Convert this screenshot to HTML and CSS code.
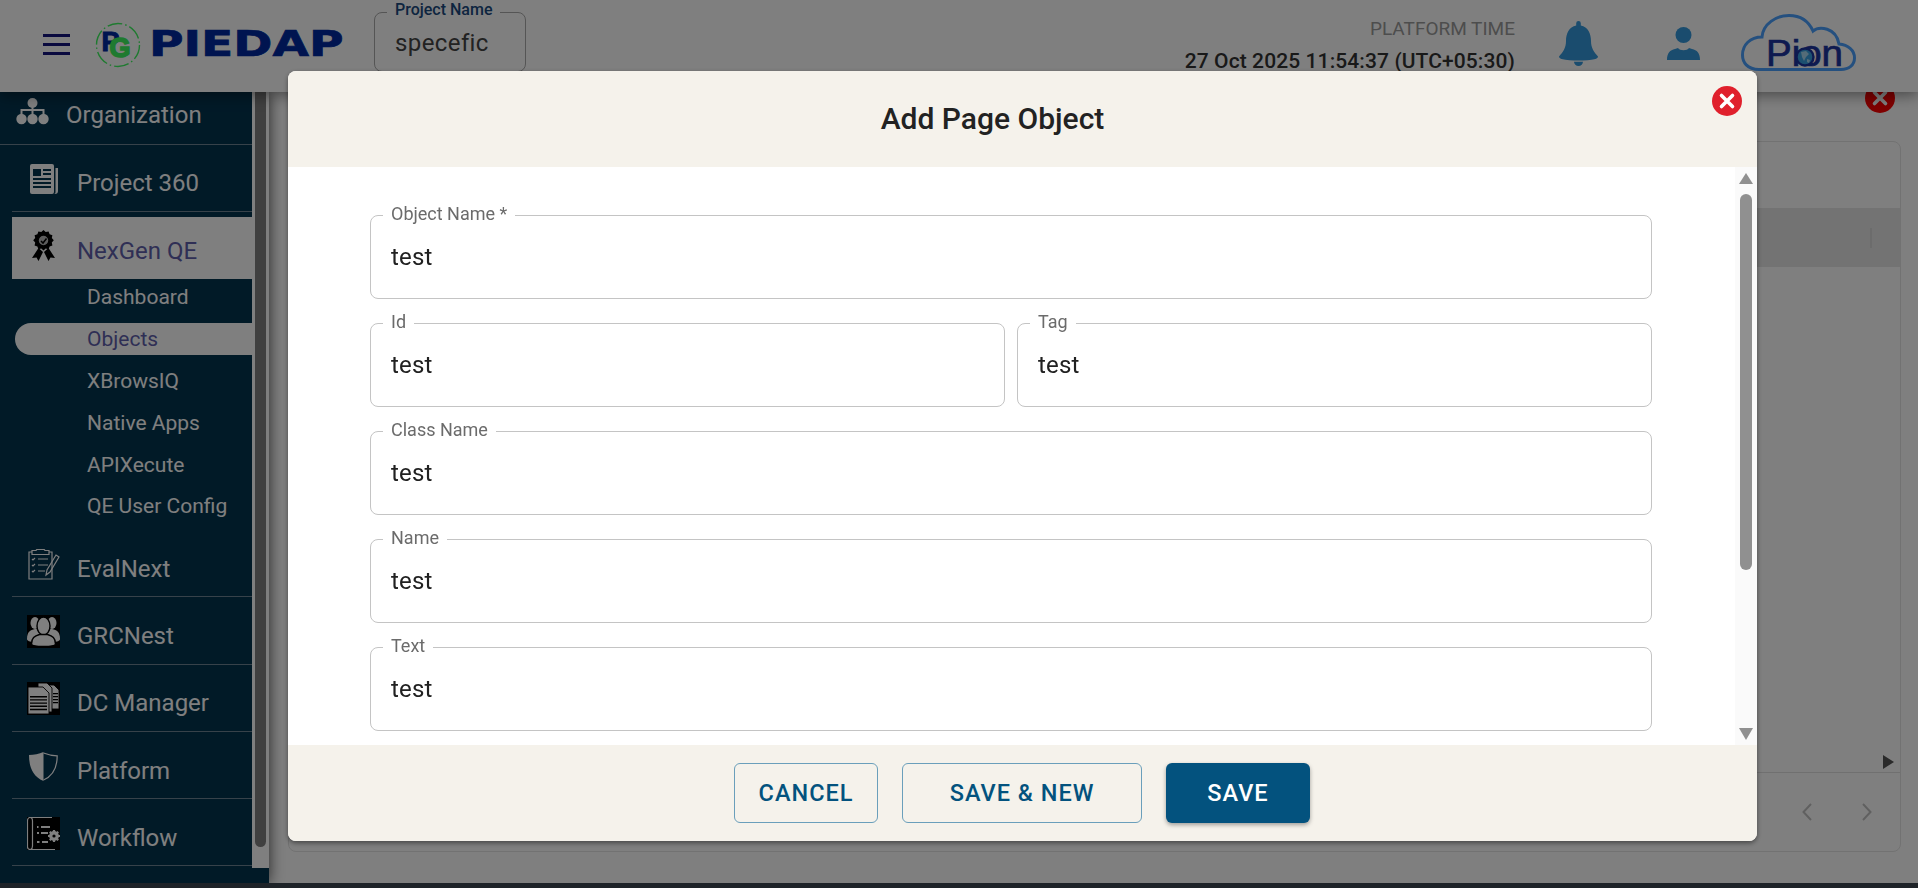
FILE: index.html
```html
<!DOCTYPE html>
<html lang="en">
<head>
<meta charset="utf-8">
<title>Add Page Object</title>
<link rel="stylesheet" href="styles.css">
</head>
<body>
<div class="app">
  <header class="topbar">
    <div class="burger"><i></i><i></i><i></i></div>
    <svg class="logo-mark" viewBox="0 0 46 46" width="46" height="46">
      <circle cx="23" cy="23" r="21.5" fill="none" stroke="#3ef460" stroke-width="1.4" stroke-dasharray="15 3 1.5 3"/>
      <text x="6.500" y="29" class="logo-type"><tspan class="logo-p">P</tspan><tspan class="logo-g" dx="-10" dy="6">G</tspan></text>
    </svg>
    <div class="brand"><span>PIEDAP</span></div>
    <div class="project">
      <span class="project-label">Project Name</span>
      <span class="project-value">specefic</span>
    </div>
    <div class="clock">
      <span class="clock-label">PLATFORM TIME</span>
      <span class="clock-value">27 Oct 2025 11:54:37 (UTC+05:30)</span>
    </div>
    <svg class="bell" viewBox="0 0 39 45" width="39" height="45"><path d="M19.5 0a2.3 2.3 0 0 0-2.3 2.3v2.2C10 6 7 12.5 7 20c0 7-3 11-7 15.5 0 1 1 2 2.5 2.5 5 1.2 11 1.5 17 1.5s12-.3 17-1.5c1.5-.5 2.5-1.5 2.5-2.5-4-4.5-7-8.5-7-15.5 0-7.5-3-14-10.2-15.5V2.3A2.3 2.3 0 0 0 19.5 0z"/><path d="M15 40.8h9a4.5 4.2 0 0 1-9 0z"/></svg>
    <svg class="user" viewBox="0 0 33 33" width="33" height="33"><circle cx="16.5" cy="8" r="8"/><path d="M0 33c0-7 3-10 8-11l3-1c2 3 9 3 11 0l3 1c5 1 8 4 8 11z"/></svg>
    <svg class="cloud" viewBox="0 0 115 64" width="115" height="64">
      <path class="cloud-line" d="M18 55.5C6 55.5 1.5 48 1.5 41 1.5 31 9 23 21 23 22 10 35 1.5 48 1.5 60 1.5 68 8 72 17 78 12 95 13 98 30 107 31 113.5 36 113.5 44 113.5 51 108 55.5 100 55.5Z"/>
      <text x="25" y="52" class="cloud-text" textLength="77" lengthAdjust="spacingAndGlyphs">Pion</text>
      <circle cx="64" cy="43" r="8.500" class="cloud-globe"/>
      <path class="cloud-land" d="M60 38l5-1 3 3-3 3-2 4-2-4zM66 45l3 1-1 3-2-1z"/>
    </svg>
  </header>

  <div class="workspace">
    <aside class="sidebar">
      <nav class="menu">
        <a class="menu-top">
          <svg class="ico-org" viewBox="0 0 33 27" width="33" height="27"><circle cx="16.5" cy="5" r="5"/><circle cx="5.500" cy="21" r="5.200"/><circle cx="16.5" cy="21" r="5.200"/><circle cx="27.500" cy="21" r="5.200"/><path d="M15.500 9h2v2h11v5h-2v-3H17.500v3h-2v-3H6.500v3h-2v-5h11z"/></svg>
          <span>Organization</span>
        </a>
        <a class="menu-item menu-first">
          <span class="ico"><svg viewBox="0 0 29 30" width="29" height="30"><path class="fill" d="M3 0h20a2 2 0 0 1 2 2v26a2 2 0 0 1-2 2H3a2 2 0 0 1-2-2V2a2 2 0 0 1 2-2z"/><path class="fill" d="M26.500 4H29v23a3 3 0 0 1-3 3h-1c1 0 1.500-1 1.500-2z"/><path class="cut" d="M4 5h8v7H4zM14 5h8v2h-8zM14 9h8v2h-8zM4 14h18v2H4zM4 18h18v2H4zM4 22h18v2H4z"/></svg></span>
          <span>Project 360</span>
        </a>
        <a class="menu-active">
          <span class="ico"><svg viewBox="0 0 23 31" width="23" height="31"><path class="ink" d="M6.500 18L0 28l4.500-.6L6.500 31l4.500-9zM16.500 18l6.500 10-4.500-.6-2 3.600-4.500-9z"/><path class="ink" d="M11.500 0l2.200 2 2.900-.6 1 2.800 2.800 1-.6 2.900 2 2.200-2 2.200.6 2.900-2.800 1-1 2.800-2.900-.6-2.200 2-2.200-2-2.900.6-1-2.800-2.800-1 .6-2.900-2-2.200 2-2.200-.6-2.900 2.800-1 1-2.800 2.900.6z"/><circle cx="11.500" cy="10.500" r="5.500" class="hole"/><path d="M9 11l2 2 3.500-4.500" class="tick"/></svg></span>
          <span>NexGen QE</span>
        </a>
        <div class="submenu">
          <a class="sub">Dashboard</a>
          <a class="sub sub-on">Objects</a>
          <a class="sub">XBrowsIQ</a>
          <a class="sub">Native Apps</a>
          <a class="sub">APIXecute</a>
          <a class="sub">QE User Config</a>
        </div>
        <a class="menu-item">
          <span class="ico"><svg viewBox="0 0 32 31" width="32" height="31" class="outline"><path d="M21 3h3v27H1V3h3"/><path d="M4 1.500h4l1-1.200h7l1 1.200h4v4H4z"/><path d="M4 10l1 1 2-2M4 16l1 1 2-2M4 22l1 1 2-2M10 10h10M10 16h10M10 22h7"/><path d="M31 8l-3-2-9 15-1 5 4-3z"/></svg></span>
          <span>EvalNext</span>
        </a>
        <a class="menu-item">
          <span class="ico"><svg viewBox="0 0 33 33" width="33" height="33"><rect width="33" height="33" class="blk"/><ellipse class="fill" cx="8" cy="8" rx="4.500" ry="6"/><ellipse class="fill" cx="25" cy="8" rx="4.500" ry="6"/><path class="fill" d="M0 24c0-7 3-9 8-10h17c5 1 8 3 8 10 0 2-3 3-7 3H7c-4 0-7-1-7-3z"/><ellipse class="person" cx="16.500" cy="11" rx="6.500" ry="9"/><path class="person" d="M4.500 29c0-6 3-8 8-9.500h8c5 1.500 8 3.500 8 9.500 0 1.500-5 2.500-12 2.500s-12-1-12-2.500z"/></svg></span>
          <span>GRCNest</span>
        </a>
        <a class="menu-item">
          <span class="ico"><svg viewBox="0 0 33 33" width="33" height="33"><rect width="33" height="33" class="blk"/><path class="doc" d="M19 3h8l5 5v19H19z"/><path class="doc" d="M11 1h9l5 5v24H11z"/><path class="doc" d="M1 5h15l6 6v21H1z"/><path class="cut2" d="M3 14h17v1.400H3zM3 17.200h17v1.400H3zM3 20.400h17v1.400H3zM3 23.600h17v1.400H3zM3 26.800h17v1.400H3zM26 11h5v1.200h-5zM26 14h5v1.200h-5zM26 17h5v1.200h-5zM26 20h5v1.200h-5z"/></svg></span>
          <span>DC Manager</span>
        </a>
        <a class="menu-item">
          <span class="ico"><svg viewBox="0 0 29 29" width="29" height="29"><path class="fill" d="M14.500 0C10 2 5 3 0 3c0 11 3 21 14.500 26z"/><path class="thin" d="M14.500 1C19 2.800 24 3.700 28.200 3.800 28.200 14 25 23.500 14.500 28"/></svg></span>
          <span>Platform</span>
        </a>
        <a class="menu-item">
          <span class="ico"><svg viewBox="0 0 33 33" width="33" height="33"><rect width="33" height="33" class="blk"/><path class="thin" d="M3 .5C1.500.5.500 2 .500 4v26c0 1 1 2.500 3 2.500H28M3 .5h22M3 .5C5 .5 5.500 2 5.500 4v25c0 1.500-.5 3-2 3.500"/><path class="thin2" d="M10 10l1.500 0M14 10h9M10 16h2M14 16h7M10 25h2.500M15 25h6"/><g class="gear"><circle cx="27" cy="19" r="3.800"/><path d="M27 13v12M21 19h12M22.800 14.800l8.400 8.400M31.200 14.800l-8.400 8.400"/></g><circle cx="27" cy="19" r="1.600" class="blk"/></svg></span>
          <span>Workflow</span>
        </a>
      </nav>
      <div class="side-scroll"><div class="side-thumb"></div></div>
    </aside>

    <main class="main">
      <div class="main-head">
        <span class="close-back">
          <svg viewBox="0 0 30 30" width="30" height="30"><path d="M9.500 9.500l11 11M20.500 9.500l-11 11"/></svg>
        </span>
      </div>
      <section class="card">
        <div class="card-head"></div>
        <div class="card-row"><i></i></div>
        <div class="card-body"><b class="tri"></b></div>
        <div class="card-foot">
          <svg viewBox="0 0 10 18" width="10" height="18"><path d="M9 1L1.500 9 9 17"/></svg>
          <svg viewBox="0 0 10 18" width="10" height="18"><path d="M1 1l7.500 8L1 17"/></svg>
        </div>
      </section>
    </main>
  </div>
  <div class="strip"></div>
</div>

<div class="backdrop"></div>

<div class="modal" role="dialog">
  <div class="modal-head">
    <h2>Add Page Object</h2>
    <button class="modal-close" aria-label="Close">
      <svg viewBox="0 0 30 30" width="30" height="30"><path d="M9.500 9.500l11 11M20.500 9.500l-11 11"/></svg>
    </button>
  </div>
  <div class="modal-body">
    <form class="form">
      <div class="field"><label>Object Name *</label><input value="test"></div>
      <div class="pair">
        <div class="field"><label>Id</label><input value="test"></div>
        <div class="field"><label>Tag</label><input value="test"></div>
      </div>
      <div class="field"><label>Class Name</label><input value="test"></div>
      <div class="field"><label>Name</label><input value="test"></div>
      <div class="field"><label>Text</label><input value="test"></div>
    </form>
    <div class="modal-scroll">
      <b class="arrow-up"></b>
      <div class="modal-thumb"></div>
      <b class="arrow-down"></b>
    </div>
  </div>
  <div class="modal-foot">
    <button class="btn btn-cancel">CANCEL</button>
    <button class="btn btn-new">SAVE &amp; NEW</button>
    <button class="btn btn-save">SAVE</button>
  </div>
</div>
</body>
</html>
```
FILE: styles.css
```css
* { box-sizing: border-box; }
html, body { margin: 0; height: 100%; overflow: hidden; }
body { font-family: Roboto, "Liberation Sans", sans-serif; background: #fff; color: #333; }
a { display: block; }

.app { display: flex; flex-direction: column; height: 888px; }

/* top bar */
.topbar {
  height: 92px; flex: none; display: flex; align-items: flex-start; padding-left: 43px;
  background: #fff; position: relative; z-index: 3; box-shadow: 0 3px 14px rgba(0,0,0,.45);
}
.burger { width: 27px; margin-top: 34px; display: flex; flex-direction: column; gap: 6px; flex: none; }
.burger i { display: block; height: 3px; background: #14147f; }
.logo-mark { margin: 22px 0 0 25px; flex: none; }
.logo-type { font: 700 27px "Liberation Sans", sans-serif; }
.logo-p { fill: #0028a0; stroke: #0028a0; stroke-width: 1; }
.logo-g { fill: #3ef460; stroke: #3ef460; stroke-width: 1.6; }
.brand { width: 225px; margin: 23px 0 0 8px; flex: none; }
.brand span {
  display: block; transform-origin: left center; transform: scaleX(1.31);
  font: 700 36px/42px "DejaVu Sans", sans-serif; color: #0028a0; -webkit-text-stroke: .7px #0028a0;
}
.project { position: relative; width: 152px; height: 60px; margin-top: 12px; border: 1px solid #aaa; border-radius: 8px; flex: none; }
.project-label {
  position: absolute; top: -12px; left: 12px; padding: 0 8px; background: #fff;
  font-size: 16px; font-weight: 500; line-height: 18px; color: #1a4a80; white-space: nowrap;
}
.project-value { position: absolute; left: 20px; top: 15px; font-size: 24px; line-height: 30px; color: #444; letter-spacing: .4px; }
.clock { margin-left: auto; margin-top: 17px; display: flex; flex-direction: column; align-items: flex-end; gap: 7px; }
.clock-label { font-size: 19px; line-height: 24px; color: #9a9a9a; }
.clock-value { font-size: 21px; line-height: 26px; font-weight: 500; color: #333; letter-spacing: .1px; }
.bell { margin: 21px 0 0 44px; flex: none; fill: #3499dc; }
.user { margin: 27px 0 0 69px; flex: none; fill: #3499dc; }
.cloud { margin: 14px 62px 0 41px; flex: none; }
.cloud-line { fill: none; stroke: #4aa0ff; stroke-width: 3; }
.cloud-text { font: 400 36px "Liberation Sans", sans-serif; fill: #1c34a0; stroke: #1c34a0; stroke-width: .7; }
.cloud-globe { fill: #38a0e0; stroke: #1c34a0; stroke-width: 2.400; }
.cloud-land { fill: #a8d8f0; }

/* work area */
.workspace { flex: 1; display: flex; min-height: 0; }
.sidebar {
  width: 269px; flex: none; display: flex; background: #03344f;
  box-shadow: 0 0 14px rgba(0,0,0,.7); position: relative; z-index: 2;
}
.menu { width: 252px; flex: none; color: #fff; font-size: 24px; overflow: hidden; }
.menu span { line-height: 30px; }
.menu-top {
  height: 53px; display: flex; align-items: center; gap: 17px; padding: 0 0 6px 16px;
  border-bottom: 1px solid #6f8594;
}
.ico-org { fill: #fff; margin-bottom: 7px; flex: none; }
.menu-item {
  height: 67.300px; margin-left: 12px; display: flex; align-items: center; gap: 17px;
  padding: 11px 0 0 15px; border-bottom: 1px solid #6f8594;
}
.menu-first { height: 67px; padding-top: 10px; }
.menu-active {
  height: 62px; margin: 5px 0 0 12px; display: flex; align-items: center; gap: 17px;
  padding: 5px 0 0 15px; background: #fff; color: #5e5eaa;
}
.ico { width: 33px; height: 33px; display: flex; align-items: center; justify-content: center; flex: none; margin-bottom: 9px; }
.menu-active .ico { margin-bottom: 11px; }
.fill { fill: #fff; }
.cut { fill: #03344f; }
.ink { fill: #000; }
.hole { fill: #bbb; stroke: #000; stroke-width: 1.500; }
.tick { fill: none; stroke: #000; stroke-width: 1.500; }
.blk { fill: #000; }
.person { fill: #fff; stroke: #000; stroke-width: 1.400; }
.doc { fill: #fff; stroke: #000; stroke-width: .9; }
.cut2 { fill: #000; }
.gear { fill: #fff; stroke: #fff; stroke-width: 2.200; }
.outline { fill: none; stroke: #fff; stroke-width: 1.200; }
.thin { fill: none; stroke: #fff; stroke-width: 1.200; }
.thin2 { fill: none; stroke: #fff; stroke-width: 1.800; }
.submenu { height: 251px; padding-top: 2.400px; margin-left: 15px; }
.sub { height: 32px; margin-bottom: 9.800px; padding-left: 72px; font-size: 21px; line-height: 32px; font-weight: 400; }
.sub-on { background: #fff; color: #5e5eaa; border-radius: 16px 0 0 16px; }
.side-scroll { width: 17px; height: 776px; background: #fff; padding: 0 3px; flex: none; }
.side-thumb { height: 755px; background: #808080; border-radius: 0 0 6px 6px; }

.main { flex: 1; min-width: 0; padding: 0 17px 31px 19px; display: flex; flex-direction: column; background: #fff; }
.main-head { height: 49px; flex: none; display: flex; justify-content: flex-end; padding-right: 6px; }
.close-back { width: 30px; height: 30px; margin-top: -9px; border-radius: 50%; background: #f00; }
.close-back svg, .modal-close svg { display: block; fill: none; stroke: #fff; stroke-width: 3.600; stroke-linecap: round; }
.card { flex: 1; display: flex; flex-direction: column; border: 1px solid #e4e4e4; border-radius: 8px; }
.card-head { height: 66px; flex: none; }
.card-row { height: 59px; flex: none; background: #e6e6e6; display: flex; align-items: center; justify-content: flex-end; padding-right: 28px; }
.card-row i { display: block; width: 2px; height: 20px; background: #d8d8d8; }
.card-body { flex: 1; display: flex; align-items: flex-end; justify-content: flex-end; padding: 0 6px 3px 0; }
.tri { width: 0; height: 0; border-left: 11px solid #555; border-top: 7px solid transparent; border-bottom: 7px solid transparent; }
.card-foot { height: 79px; flex: none; border-top: 1px solid #e0e0e0; display: flex; align-items: center; justify-content: flex-end; gap: 50px; padding: 0 28px 0 0; }
.card-foot svg { fill: none; stroke: #c0c0c0; stroke-width: 2; }
.strip { height: 5px; flex: none; background: #3c4650; position: relative; z-index: 2; }

/* dialog */
.backdrop { position: fixed; inset: 0; z-index: 5; background: rgba(0,0,0,.5); }
.modal {
  position: fixed; z-index: 6; left: 288px; top: 71px; width: 1469px; height: 770px;
  display: flex; flex-direction: column; background: #fff; border-radius: 8px; overflow: hidden;
  box-shadow: 0 2px 5px rgba(0,0,0,.45);
}
.modal-head { height: 96px; flex: none; position: relative; display: flex; align-items: center; justify-content: center; padding-right: 60px; background: #f5f2eb; }
.modal-head h2 { margin: 0; font-size: 30px; line-height: 34px; font-weight: 500; color: #222; }
.modal-close { position: absolute; top: 15px; right: 15px; width: 30px; height: 30px; padding: 0; border: 0; border-radius: 50%; background: #e0202c; }
.modal-body { flex: 1; min-height: 0; display: flex; }
.form { flex: 1; min-width: 0; padding: 48px 83px 0 82px; display: flex; flex-direction: column; gap: 24px; }
.pair { display: flex; gap: 12px; }
.pair .field { flex: 1; }
.field { position: relative; height: 84px; border: 1px solid #c4c4c4; border-radius: 8px; }
.field label {
  position: absolute; top: -12px; left: 12px; padding: 0 8px; background: #fff;
  font-size: 18px; line-height: 20px; color: #6b6b6b; white-space: nowrap;
}
.field input {
  display: block; width: 100%; height: 100%; padding: 0 20px; border: 0; outline: 0; background: transparent;
  font: 400 24px Roboto, sans-serif; letter-spacing: .2px; color: #212121;
}
.modal-scroll { width: 22px; flex: none; position: relative; background: #fafafa; }
.arrow-up, .arrow-down { position: absolute; left: 4px; width: 0; height: 0; border-left: 7px solid transparent; border-right: 7px solid transparent; }
.arrow-up { top: 6px; border-bottom: 11px solid #909090; }
.arrow-down { bottom: 5px; border-top: 12px solid #909090; }
.modal-thumb { position: absolute; left: 5px; top: 27px; width: 12px; height: 376px; border-radius: 6px; background: #909090; }
.modal-foot { height: 96px; flex: none; display: flex; align-items: center; justify-content: flex-start; gap: 24px; padding-left: 446px; background: #f5f2eb; }
.btn { height: 60px; padding: 0; border-radius: 6px; font: 500 23.500px Roboto, sans-serif; letter-spacing: 1px; cursor: pointer; }
.btn-cancel, .btn-new { background: transparent; border: 1px solid #6a9fbb; color: #03527e; }
.btn-cancel { width: 144px; }
.btn-new { width: 240px; }
.btn-save { width: 144px; border: 0; color: #fff; background: #03527e; box-shadow: 0 2px 4px rgba(0,0,0,.35); }
```
